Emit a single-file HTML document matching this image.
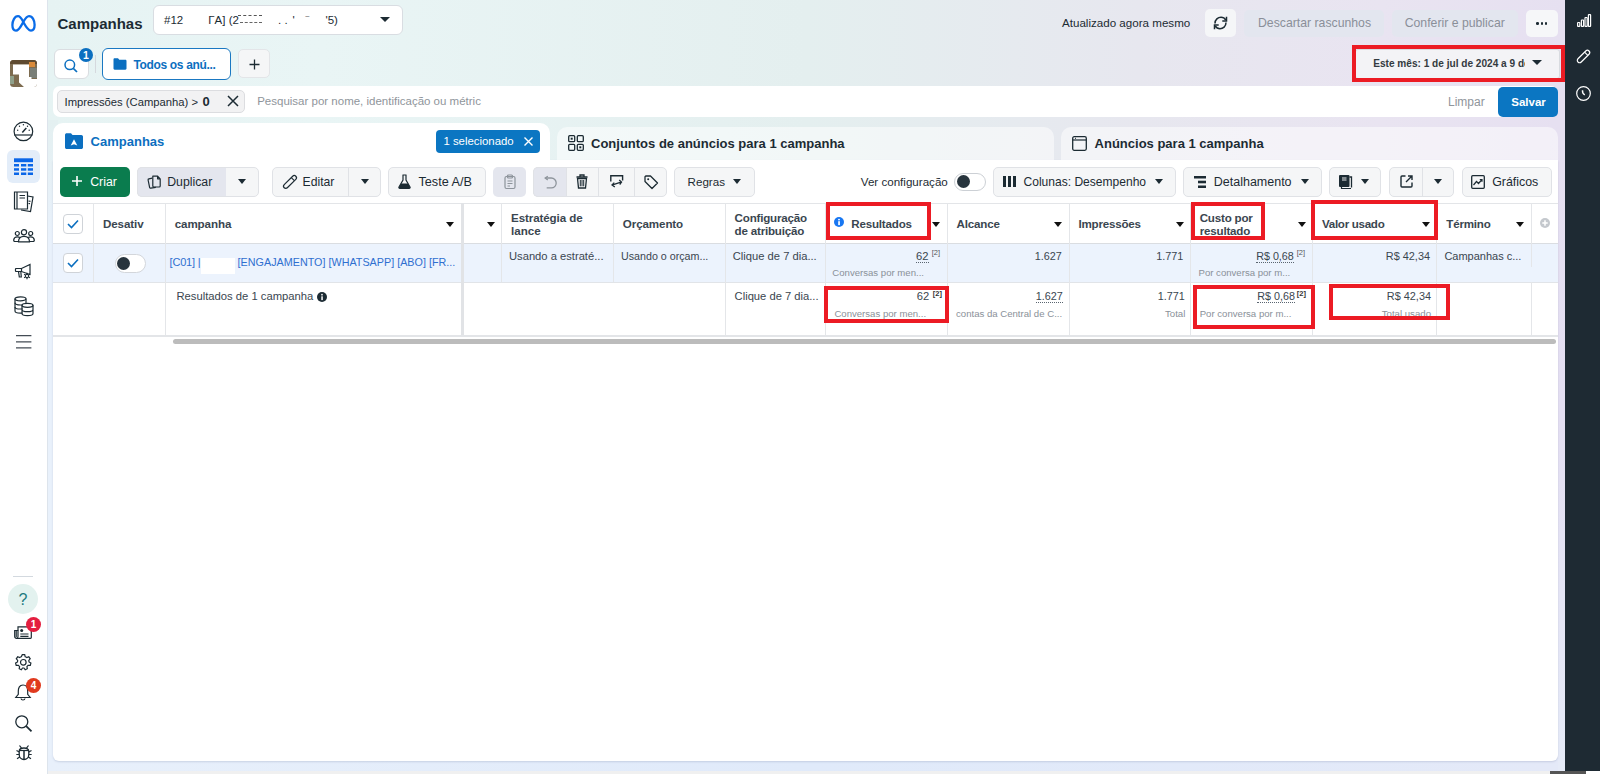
<!DOCTYPE html>
<html><head><meta charset="utf-8">
<style>
*{box-sizing:border-box;margin:0;padding:0}
html,body{width:1600px;height:774px;overflow:hidden;font-family:"Liberation Sans",sans-serif;color:#1c2b33}
body{position:relative;background:#fff}
.abs{position:absolute}
.t{position:absolute;white-space:nowrap;line-height:1}
svg{overflow:visible}
</style></head><body>
<div class="abs" style="left:48px;top:0px;width:1517px;height:774px;background:#e8eff9"></div>
<div class="abs" style="left:48px;top:0px;width:1517px;height:165px;background:linear-gradient(90deg,#e6f3f3 0%,#e9f5f5 18%,#e4efef 50%,#e7e7ef 72%,#e9e4f1 88%,#e6e0f1 100%)"></div>
<div class="abs" style="left:48px;top:120px;width:10px;height:654px;background:linear-gradient(180deg,#e4f0f1 0px,#e9f1fb 120px,#e9f1fb 100%)"></div>
<div class="abs" style="left:1550px;top:120px;width:15px;height:651px;background:linear-gradient(180deg,#e6e0f1 0px,#e4dff2 300px,#e6ebf8 100%)"></div>
<div class="abs" style="left:48px;top:755px;width:1510px;height:16px;background:linear-gradient(90deg,#e8f0fb 0%,#e0eafa 50%,#e4e9f8 100%)"></div>
<div class="abs" style="left:47px;top:771px;width:1553px;height:3px;background:#f0f0f0"></div>
<div class="abs" style="left:0px;top:0px;width:47px;height:774px;background:#fff"></div>
<div class="abs" style="left:46.5px;top:0px;width:1.5px;height:774px;background:#dde4ec"></div>
<div class="abs" style="left:1565px;top:0px;width:35px;height:771px;background:#1e2a33"></div>
<svg class="abs" style="left:11px;top:14px;" width="25" height="18" viewBox="0 0 25 18"><path d="M5 16.6 C8 16.6 10 12 12.3 8 C14 5 15.5 2.2 18 2.2 C21.5 2.2 23.6 6.5 23.6 10.8 C23.6 14.5 22 16.6 20 16.6 C17.5 16.6 15.5 14 12.3 8 C10.5 4.5 9.5 2.2 7 2.2 C3.5 2.2 1.4 7 1.4 11 C1.4 14.5 3 16.6 5 16.6 Z" fill="none" stroke="#0a6ce8" stroke-width="2.3" stroke-linejoin="round"/></svg>
<svg class="abs" style="left:10px;top:60px;" width="27" height="27" viewBox="0 0 27 27"><defs><clipPath id="av"><rect x="0" y="0" width="27" height="27" rx="3.5"/></clipPath></defs><g clip-path="url(#av)"><rect x="0" y="0" width="27" height="27" fill="#7d6c50"/><rect x="0" y="0" width="27" height="4" fill="#5e4a30"/><rect x="19" y="2" width="6" height="5" fill="#d98a3a"/><rect x="20" y="8" width="7" height="10" fill="#7a7f78"/><rect x="0" y="16" width="4" height="8" fill="#8fa08a"/><path d="M3 4.5 L19 4.5 L19 17 L21.5 17 L21.5 19 L27 19 L27 27 L14 27 L9 22.5 L9 14.5 L3 14.5 Z" fill="#ffffff"/></g></svg>
<div class="abs" style="left:7px;top:150px;width:33px;height:33px;background:#e3edf9;border-radius:6px"></div>
<svg class="abs" style="left:13px;top:121px;" width="21" height="21" viewBox="0 0 21 21"><circle cx="10.4" cy="10.4" r="9.3" fill="none" stroke="#1c2b33" stroke-width="1.2"/><path d="M1.3 14 L19.5 14" fill="none" stroke="#1c2b33" stroke-width="1.2"/><path d="M9.3 11.5 L13.3 7" fill="none" stroke="#1c2b33" stroke-width="1.5"/><g fill="#1c2b33"><circle cx="4.7" cy="9.3" r="0.7"/><circle cx="6.5" cy="5.3" r="0.7"/><circle cx="10.4" cy="3.8" r="0.7"/><circle cx="14.5" cy="5.3" r="0.7"/><circle cx="16.2" cy="9.3" r="0.7"/></g></svg>
<svg class="abs" style="left:14px;top:158px;" width="19" height="17" viewBox="0 0 19 17"><g fill="#0a66e8"><rect x="0" y="0.3" width="19" height="3.9"/><rect x="0" y="6" width="5" height="2.5"/><rect x="7" y="6" width="5.3" height="2.5"/><rect x="13.8" y="6" width="5.2" height="2.5"/><rect x="0" y="10.2" width="5" height="2.5"/><rect x="7" y="10.2" width="5.3" height="2.5"/><rect x="13.8" y="10.2" width="5.2" height="2.5"/><rect x="0" y="14.5" width="5" height="2.5"/><rect x="7" y="14.5" width="5.3" height="2.5"/><rect x="13.8" y="14.5" width="5.2" height="2.5"/></g></svg>
<svg class="abs" style="left:13px;top:191px;" width="21" height="21" viewBox="0 0 21 21"><path d="M14.5 5 L20 6 L17.5 20.5 L8 19" fill="none" stroke="#1c2b33" stroke-width="1.2"/><path d="M1.5 1 L14.5 1 L14.5 18 L1.5 18 Z" fill="none" stroke="#1c2b33" stroke-width="1.2"/><path d="M4 1 L4 18" fill="none" stroke="#1c2b33" stroke-width="1.2"/><path d="M6.5 4.5 L12 4.5 M6.5 7 L12 7" fill="none" stroke="#1c2b33" stroke-width="1.2"/><path d="M15.5 10 L17.5 10.3 M15.5 12.5 L17 12.7" fill="none" stroke="#1c2b33" stroke-width="1.2"/></svg>
<svg class="abs" style="left:12.5px;top:229px;" width="22" height="14" viewBox="0 0 22 14"><circle cx="11" cy="3.2" r="2.6" fill="none" stroke="#1c2b33" stroke-width="1.2"/><circle cx="4.3" cy="4.5" r="2" fill="none" stroke="#1c2b33" stroke-width="1.2"/><circle cx="17.7" cy="4.5" r="2" fill="none" stroke="#1c2b33" stroke-width="1.2"/><path d="M5.5 12.8 C5.5 8.8 8 7.3 11 7.3 C14 7.3 16.5 8.8 16.5 12.8 Z" fill="none" stroke="#1c2b33" stroke-width="1.2"/><path d="M5.5 12.5 L2 12.5 C0.8 12.5 0.6 11.5 0.7 10.8 C1 8.8 2.5 7.8 4.3 7.8 C5.3 7.8 6.2 8.1 6.9 8.6" fill="none" stroke="#1c2b33" stroke-width="1.2"/><path d="M16.5 12.5 L20 12.5 C21.2 12.5 21.4 11.5 21.3 10.8 C21 8.8 19.5 7.8 17.7 7.8 C16.7 7.8 15.8 8.1 15.1 8.6" fill="none" stroke="#1c2b33" stroke-width="1.2"/></svg>
<svg class="abs" style="left:15px;top:263px;" width="17" height="17" viewBox="0 0 17 17"><path d="M1 5.5 L6.5 5.5 L15 1.5 L15 11.5 L6.5 8.5 L1 8.5 C0.7 8.5 0.5 8.3 0.5 8 L0.5 6 C0.5 5.7 0.7 5.5 1 5.5 Z" fill="none" stroke="#1c2b33" stroke-width="1.2"/><path d="M3.5 8.5 L4.3 14 L6.3 14 L5.8 8.5" fill="none" stroke="#1c2b33" stroke-width="1.2"/><path d="M6.5 5.5 L6.5 8.5" fill="none" stroke="#1c2b33" stroke-width="1.2"/><g transform="translate(12,13)"><path d="M0 -3.3 L0 3.3 M-2.9 -1.65 L2.9 1.65 M-2.9 1.65 L2.9 -1.65" stroke="#1c2b33" stroke-width="1.2"/><circle r="1.6" fill="#fff" stroke="#1c2b33" stroke-width="1"/></g></svg>
<svg class="abs" style="left:14px;top:296px;" width="20" height="21" viewBox="0 0 20 21"><ellipse cx="6.5" cy="2.8" rx="5.5" ry="2" fill="none" stroke="#1c2b33" stroke-width="1.2"/><path d="M1 2.8 L1 15 C1 16.3 3.5 17.2 6.5 17.2 C7.3 17.2 8 17.1 8.6 17" fill="none" stroke="#1c2b33" stroke-width="1.2"/><path d="M12 2.8 L12 8" fill="none" stroke="#1c2b33" stroke-width="1.2"/><path d="M1 6.8 C1 8.1 3.5 9 6.5 9 C7.5 9 8.2 8.9 8.6 8.8 M1 10.9 C1 12.2 3.5 13 6.5 13 C7.5 13 8.2 12.9 8.6 12.8" fill="none" stroke="#1c2b33" stroke-width="1.2"/><ellipse cx="13.5" cy="9.3" rx="5.5" ry="2" fill="#fff" stroke="#1c2b33" stroke-width="1.2"/><path d="M8 9.3 L8 17.5 C8 18.8 10.5 19.7 13.5 19.7 C16.5 19.7 19 18.8 19 17.5 L19 9.3 M8 13.4 C8 14.7 10.5 15.6 13.5 15.6 C16.5 15.6 19 14.7 19 13.4" fill="none" stroke="#1c2b33" stroke-width="1.2"/></svg>
<svg class="abs" style="left:15.8px;top:335px;" width="16" height="14" viewBox="0 0 16 14"><path d="M0 0.6 L15.4 0.6 M0 6.8 L15.4 6.8 M0 12.9 L15.4 12.9" stroke="#444c55" stroke-width="1.2"/></svg>
<div class="abs" style="left:13.4px;top:576px;width:19.6px;height:1.2px;background:#d3d9df"></div>
<div class="abs" style="left:8.2px;top:584px;width:30px;height:30px;border-radius:50%;background:#e3f2ef"></div>
<div class="t" style="left:18.5px;top:591.96px;font-size:16px;color:#1d7a80;font-weight:normal;">?</div>
<svg class="abs" style="left:14px;top:626px;" width="18" height="13" viewBox="0 0 18 13"><path d="M4 0.8 L16.5 0.8 C17 0.8 17.3 1.1 17.3 1.6 L17.3 11.5 C17.3 12 17 12.3 16.5 12.3 L2.5 12.3 C1.5 12.3 0.7 11.5 0.7 10.5 L0.7 4.5 L4 4.5 Z" fill="none" stroke="#1c2b33" stroke-width="1.2"/><path d="M4 4.5 L4 10.5 C4 11.5 3.4 12.3 2.5 12.3" fill="none" stroke="#1c2b33" stroke-width="1.2"/><path d="M2.2 5 L2.2 11" fill="none" stroke="#1c2b33" stroke-width="1.2"/><circle cx="7.7" cy="4.5" r="1.5" fill="#1c2b33"/><path d="M6.3 8 L14.5 8 M6.3 10.3 L14.5 10.3" fill="none" stroke="#1c2b33" stroke-width="1.2"/></svg>
<div class="abs" style="left:26px;top:617px;width:15px;height:15px;border-radius:50%;background:#e41e3f;color:#fff;font-size:10px;font-weight:bold;text-align:center;line-height:15px">1</div>
<svg class="abs" style="left:14.5px;top:654.3px;" width="17" height="17" viewBox="0 0 17 17"><path d="M7.3 0.7 L9.7 0.7 L10.2 2.8 C10.8 3 11.3 3.3 11.8 3.6 L13.8 2.8 L15.2 4.8 L13.8 6.4 C13.9 6.9 14 7.5 14 8 L15.9 9 L15.3 11.3 L13.1 11.3 C12.8 11.8 12.4 12.2 11.9 12.6 L12.3 14.7 L10.2 15.7 L8.9 14 C8.5 14 8 14 7.6 14 L6.3 15.7 L4.2 14.7 L4.6 12.6 C4.1 12.2 3.7 11.8 3.4 11.3 L1.2 11.3 L0.6 9 L2.5 8 C2.5 7.5 2.6 6.9 2.7 6.4 L1.3 4.8 L2.7 2.8 L4.7 3.6 C5.2 3.3 5.7 3 6.3 2.8 Z" fill="none" stroke="#1c2b33" stroke-width="1.2"/><circle cx="8.3" cy="8.3" r="2.8" fill="none" stroke="#1c2b33" stroke-width="1.2"/></svg>
<svg class="abs" style="left:15px;top:683.5px;" width="16" height="17.5" viewBox="0 0 16 17.5"><path d="M8 1 C4.5 1 3.3 3.8 3.3 7 L3.3 10.3 L0.8 13.5 L15.2 13.5 L12.7 10.3 L12.7 7 C12.7 3.8 11.5 1 8 1 Z" fill="none" stroke="#1c2b33" stroke-width="1.2"/><path d="M6 14.5 C6.3 16.5 9.7 16.5 10 14.5" fill="none" stroke="#1c2b33" stroke-width="1.2"/></svg>
<div class="abs" style="left:26px;top:677.5px;width:15px;height:15px;border-radius:50%;background:#e03a1e;color:#fff;font-size:10px;font-weight:bold;text-align:center;line-height:15px">4</div>
<svg class="abs" style="left:15px;top:714.5px;" width="18" height="17" viewBox="0 0 18 17"><circle cx="6.8" cy="6.8" r="6" fill="none" stroke="#1c2b33" stroke-width="1.3"/><path d="M11.2 11.2 L16.5 16.3" stroke="#1c2b33" stroke-width="1.8"/></svg>
<svg class="abs" style="left:15.5px;top:744px;" width="16" height="16.5" viewBox="0 0 16 16.5"><path d="M3.2 7.5 C3.2 4.8 5.3 4 8 4 C10.7 4 12.8 4.8 12.8 7.5 L12.8 10.5 C12.8 13.5 10.7 15.5 8 15.5 C5.3 15.5 3.2 13.5 3.2 10.5 Z" fill="none" stroke="#1c2b33" stroke-width="1.3"/><path d="M8 6 L8 15" stroke="#1c2b33" stroke-width="1.5"/><path d="M3.2 6.5 L12.8 6.5" fill="none" stroke="#1c2b33" stroke-width="1.2"/><path d="M5.5 4.2 L3.5 1.5 M10.5 4.2 L12.5 1.5 M3.3 8 L0.5 6.5 M12.7 8 L15.5 6.5 M3.2 10.5 L0.3 10.5 M12.8 10.5 L15.7 10.5 M3.7 13 L1 14.8 M12.3 13 L15 14.8" fill="none" stroke="#1c2b33" stroke-width="1.2"/></svg>
<svg class="abs" style="left:1576.5px;top:13.5px;" width="14" height="13" viewBox="0 0 14 13"><g fill="none" stroke="#fff" stroke-width="1.2"><rect x="0.6" y="8.5" width="2.2" height="3.9" rx="0.5"/><rect x="4.4" y="6" width="2.2" height="6.4" rx="0.5"/><rect x="8" y="3.5" width="2.2" height="8.9" rx="0.5"/><rect x="11.4" y="0.6" width="2.2" height="11.8" rx="0.5"/></g></svg>
<svg class="abs" style="left:1576px;top:49px;" width="15" height="15" viewBox="0 0 15 15"><g transform="rotate(-45 7.5 7.5)"><rect x="-0.3" y="5.2" width="15.6" height="4.6" rx="2.3" fill="none" stroke="#fff" stroke-width="1.2"/><path d="M11.3 5.2 L11.3 9.8" stroke="#fff" stroke-width="1.1"/></g></svg>
<svg class="abs" style="left:1576px;top:85.5px;" width="15" height="15" viewBox="0 0 15 15"><circle cx="7.5" cy="7.5" r="6.8" fill="none" stroke="#fff" stroke-width="1.2"/><path d="M6.5 4.3 C6.3 6.5 6.8 7.8 8.8 8.8" fill="none" stroke="#fff" stroke-width="1.4"/></svg>
<div class="t" style="left:57.5px;top:15.50px;font-size:15px;color:#1c2b33;font-weight:bold;">Campanhas</div>
<div class="abs" style="left:153px;top:5px;width:250px;height:30px;background:#fff;border:1px solid #d9dde2;border-radius:6px"></div>
<div class="t" style="left:164px;top:14.77px;font-size:11.5px;color:#1c2b33;font-weight:normal;">#12</div>
<div class="t" style="left:208.25px;top:14.77px;font-size:11.5px;color:#1c2b33;font-weight:normal;">ΓA] (2</div>
<div class="abs" style="left:238px;top:15px;width:24px;height:2px;border-top:1px dashed #555"></div>
<div class="abs" style="left:240px;top:22px;width:22px;height:2px;border-top:1.5px dashed #666"></div>
<div class="t" style="left:278px;top:14.77px;font-size:11.5px;color:#1c2b33;font-weight:normal;">. .</div>
<div class="t" style="left:292.5px;top:14.77px;font-size:11.5px;color:#1c2b33;font-weight:normal;">'</div>
<div class="t" style="left:305px;top:12.73px;font-size:8px;color:#555;font-weight:normal;">~</div>
<div class="t" style="left:325.5px;top:14.77px;font-size:11.5px;color:#1c2b33;font-weight:normal;">'5)</div>
<div class="abs" style="left:380.0px;top:16.8px;width:0;height:0;border-left:5.0px solid transparent;border-right:5.0px solid transparent;border-top:5.5px solid #1c2b33"></div>
<div class="t" style="left:1062px;top:17.43px;font-size:11.6px;color:#1c2b33;font-weight:normal;">Atualizado agora mesmo</div>
<div class="abs" style="left:1205px;top:9px;width:31px;height:28px;background:#f5f6f8;border-radius:5px"></div>
<svg class="abs" style="left:1213px;top:16px;" width="15" height="14" viewBox="0 0 15 14"><path d="M2 7.5 C2 3.5 5 1.3 8 1.3 C10.5 1.3 12 2.7 12.8 4" fill="none" stroke="#1c2b33" stroke-width="1.5"/><path d="M13.5 0.8 L13.5 5 L9.3 5" fill="none" stroke="#1c2b33" stroke-width="1.5"/><path d="M13 6.5 C13 10.5 10 12.7 7 12.7 C4.5 12.7 3 11.3 2.2 10" fill="none" stroke="#1c2b33" stroke-width="1.5"/><path d="M1.5 13.2 L1.5 9 L5.7 9" fill="none" stroke="#1c2b33" stroke-width="1.5"/></svg>
<div class="abs" style="left:1244px;top:9.5px;width:140px;height:27.5px;background:#e3e6ef;border-radius:5px"></div>
<div class="t" style="left:1258px;top:17.13px;font-size:12.25px;color:#8a8f99;font-weight:normal;">Descartar rascunhos</div>
<div class="abs" style="left:1392px;top:9.5px;width:126px;height:27.5px;background:#e3e6ef;border-radius:5px"></div>
<div class="t" style="left:1404.7px;top:17.13px;font-size:12.25px;color:#8a8f99;font-weight:normal;">Conferir e publicar</div>
<div class="abs" style="left:1526px;top:9.5px;width:31.5px;height:27.5px;background:#f6f7f9;border-radius:5px"></div>
<div class="abs" style="left:1536.2px;top:22.1px;width:2.6px;height:2.6px;background:#1c2b33;border-radius:50%"></div>
<div class="abs" style="left:1540.5px;top:22.1px;width:2.6px;height:2.6px;background:#1c2b33;border-radius:50%"></div>
<div class="abs" style="left:1544.8px;top:22.1px;width:2.6px;height:2.6px;background:#1c2b33;border-radius:50%"></div>
<div class="abs" style="left:53.5px;top:49px;width:35.5px;height:30px;background:#fff;border:1px solid #dadde1;border-radius:6px"></div>
<svg class="abs" style="left:63.5px;top:58.5px;" width="14" height="14" viewBox="0 0 14 14"><circle cx="5.8" cy="5.8" r="4.8" fill="none" stroke="#0b6fc0" stroke-width="1.5"/><path d="M9.3 9.3 L13 13" stroke="#0b6fc0" stroke-width="1.7"/></svg>
<div class="abs" style="left:79px;top:48px;width:14px;height:14px;border-radius:50%;background:#0b6fc0;color:#fff;font-size:10.5px;font-weight:bold;text-align:center;line-height:14px">1</div>
<div class="abs" style="left:95px;top:55px;width:1px;height:18px;background:#d5d9de"></div>
<div class="abs" style="left:102px;top:48px;width:129px;height:32px;background:#fff;border:1.5px solid #1a78c2;border-radius:6px"></div>
<svg class="abs" style="left:113px;top:58px;" width="14" height="12" viewBox="0 0 14 12"><path d="M0.5 1.5 C0.5 0.8 1 0.3 1.6 0.3 L5 0.3 L6.3 1.8 L12.4 1.8 C13 1.8 13.5 2.3 13.5 2.9 L13.5 10.6 C13.5 11.2 13 11.7 12.4 11.7 L1.6 11.7 C1 11.7 0.5 11.2 0.5 10.6 Z" fill="#0b6fc0"/></svg>
<div class="t" style="left:133.5px;top:59.04px;font-size:12px;color:#0b6fc0;font-weight:bold;letter-spacing:-0.35px">Todos os anú...</div>
<div class="abs" style="left:238px;top:49px;width:32px;height:29px;background:#f5f6f7;border:1px solid #e3e5e8;border-radius:5px"></div>
<svg class="abs" style="left:249px;top:59px;" width="11" height="11" viewBox="0 0 11 11"><path d="M5.5 0.5 L5.5 10.5 M0.5 5.5 L10.5 5.5" stroke="#1c2b33" stroke-width="1.3"/></svg>
<div class="abs" style="left:1355px;top:49px;width:205px;height:30px;background:#f3f3f6;border:1px solid #d8dbe0;border-radius:3px"></div>
<div class="abs" style="left:1373px;top:52px;width:152px;height:22px;overflow:hidden">
<div class="t" style="left:0.2px;top:6.65px;font-size:10.1px;color:#333a40;font-weight:bold;">Este mês: 1 de jul de 2024 a 9 de</div>
</div>
<div class="abs" style="left:1532.0px;top:60.2px;width:0;height:0;border-left:5.0px solid transparent;border-right:5.0px solid transparent;border-top:5.5px solid #1c2b33"></div>
<div class="abs" style="left:1351.5px;top:44.8px;width:213.0px;height:37.7px;border:4.3px solid #ec1b24"></div>
<div class="abs" style="left:53px;top:86px;width:1505px;height:31px;background:#fff;border-radius:7px"></div>
<div class="abs" style="left:57px;top:90px;width:188px;height:23px;background:#f2f2f3;border:1px solid #dcdde0;border-radius:5px"></div>
<div class="t" style="left:64.5px;top:96.73px;font-size:11.25px;color:#1c2b33;font-weight:normal;">Impressões (Campanha) &gt;</div>
<div class="t" style="left:202.5px;top:95.25px;font-size:13px;color:#1c2b33;font-weight:bold;">0</div>
<svg class="abs" style="left:227px;top:95px;" width="12" height="12" viewBox="0 0 12 12"><path d="M1 1 L11 11 M11 1 L1 11" stroke="#1c2b33" stroke-width="1.5"/></svg>
<div class="t" style="left:257.2px;top:96.27px;font-size:11.5px;color:#8f959b;font-weight:normal;">Pesquisar por nome, identificação ou métric</div>
<div class="t" style="left:1448px;top:95.84px;font-size:12px;color:#8f959b;font-weight:normal;">Limpar</div>
<div class="abs" style="left:1497.5px;top:86.5px;width:60.5px;height:30px;background:#0b76c2;border-radius:5px"></div>
<div class="t" style="left:1511.3px;top:96.87px;font-size:11.5px;color:#fff;font-weight:bold;">Salvar</div>
<div class="abs" style="left:53px;top:160px;width:1505px;height:601px;background:#fff;border-radius:0 0 6px 6px;box-shadow:0 1px 2px rgba(60,80,120,0.18)"></div>
<div class="abs" style="left:53px;top:123px;width:497px;height:40px;background:#fff;border-radius:10px 10px 0 0"></div>
<div class="abs" style="left:557px;top:127px;width:497px;height:36px;background:rgba(255,255,255,0.5);border-radius:10px 10px 0 0"></div>
<div class="abs" style="left:1061px;top:127px;width:497px;height:36px;background:rgba(255,255,255,0.5);border-radius:10px 10px 0 0"></div>
<svg class="abs" style="left:64.5px;top:133.3px;" width="18" height="16.7" viewBox="0 0 18 16.7"><path d="M0 2 C0 1 0.8 0.3 1.6 0.3 L6 0.3 L7.5 2 L16.4 2 C17.2 2 18 2.8 18 3.6 L18 14.4 C18 15.2 17.2 16 16.4 16 L1.6 16 C0.8 16 0 15.2 0 14.4 Z" fill="#0b6fc0"/><path d="M9 6.3 L12.3 12.6 L9 11.2 L5.7 12.6 Z" fill="#fff"/></svg>
<div class="t" style="left:90.6px;top:135.20px;font-size:13px;color:#0b6fc0;font-weight:bold;">Campanhas</div>
<div class="abs" style="left:436px;top:130px;width:104px;height:23px;background:#0b76c2;border-radius:4px"></div>
<div class="t" style="left:443.4px;top:135.95px;font-size:11.4px;color:#fff;font-weight:normal;">1 selecionado</div>
<svg class="abs" style="left:524px;top:137px;" width="9" height="9" viewBox="0 0 9 9"><path d="M0.5 0.5 L8.5 8.5 M8.5 0.5 L0.5 8.5" stroke="#fff" stroke-width="1.4"/></svg>
<svg class="abs" style="left:568px;top:135px;" width="16" height="16" viewBox="0 0 16 16"><g fill="none" stroke="#1c2b33" stroke-width="1.3"><rect x="0.7" y="0.7" width="6" height="6" rx="1"/><rect x="9.3" y="0.7" width="6" height="6" rx="1"/><rect x="0.7" y="9.3" width="6" height="6" rx="1"/><rect x="9.3" y="9.3" width="6" height="6" rx="1"/></g><rect x="2.7" y="2.7" width="2" height="2" fill="#1c2b33"/><rect x="11.3" y="11.3" width="2" height="2" fill="#1c2b33"/></svg>
<div class="t" style="left:591px;top:136.60px;font-size:13px;color:#1c2b33;font-weight:bold;">Conjuntos de anúncios para 1 campanha</div>
<svg class="abs" style="left:1072px;top:136px;" width="15" height="15" viewBox="0 0 15 15"><rect x="0.7" y="0.7" width="13.6" height="13.6" rx="1.5" fill="none" stroke="#1c2b33" stroke-width="1.3"/><path d="M0.7 4 L14.3 4" stroke="#1c2b33" stroke-width="1.2"/><path d="M3 2.3 L4 2.3" stroke="#1c2b33" stroke-width="1"/></svg>
<div class="t" style="left:1094.6px;top:136.60px;font-size:13px;color:#1c2b33;font-weight:bold;">Anúncios para 1 campanha</div>
<div class="abs" style="left:60px;top:167px;width:70px;height:29.5px;background:#0a7c4e;border-radius:5px"></div>
<svg class="abs" style="left:72px;top:176px;" width="10" height="10" viewBox="0 0 10 10"><path d="M5 0 L5 10 M0 5 L10 5" stroke="#fff" stroke-width="1.6"/></svg>
<div class="t" style="left:90.2px;top:175.89px;font-size:12.3px;color:#fff;font-weight:normal;">Criar</div>
<div class="abs" style="left:137px;top:167px;width:121.5px;height:29.5px;background:#f5f6f7;border:1px solid #e0e2e6;border-radius:5px"></div>
<div class="abs" style="left:137px;top:167px;width:89px;height:29.5px;background:#e4e6ee;border-radius:5px 0 0 5px;border:1px solid #e0e2e6;border-right:none"></div>
<svg class="abs" style="left:146.5px;top:174.5px;" width="14" height="14" viewBox="0 0 14 14"><path d="M5.2 3.2 L1.9 3.8 C1.3 3.9 1 4.4 1.1 5 L2.6 12.4 C2.7 13 3.2 13.3 3.8 13.2 L8.8 12.3" fill="none" stroke="#1c2b33" stroke-width="1.2" stroke-linejoin="round"/><path d="M5.8 1.2 L10.6 1.2 L13.2 3.8 L13.2 11 C13.2 11.6 12.8 12 12.2 12 L6.8 12 C6.2 12 5.8 11.6 5.8 11 Z M10.6 1.2 L10.6 3.8 L13.2 3.8" fill="none" stroke="#1c2b33" stroke-width="1.2" stroke-linejoin="round"/></svg>
<div class="t" style="left:167.2px;top:175.89px;font-size:12.3px;color:#1c2b33;font-weight:normal;">Duplicar</div>
<div class="abs" style="left:237.5px;top:178.8px;width:0;height:0;border-left:4.5px solid transparent;border-right:4.5px solid transparent;border-top:5.5px solid #1c2b33"></div>
<div class="abs" style="left:272px;top:167px;width:109px;height:29.5px;background:#f5f6f7;border:1px solid #e0e2e6;border-radius:5px"></div>
<div class="abs" style="left:348px;top:168px;width:1px;height:27.5px;background:#e0e2e6"></div>
<svg class="abs" style="left:282.5px;top:174.5px;" width="14" height="14" viewBox="0 0 14 14"><g transform="rotate(-45 7 7)"><rect x="-1.2" y="4.8" width="16.4" height="4.4" rx="2.2" fill="none" stroke="#1c2b33" stroke-width="1.2"/><path d="M11 4.8 L11 9.2" stroke="#1c2b33" stroke-width="1.1"/></g></svg>
<div class="t" style="left:302.6px;top:175.97px;font-size:12.2px;color:#1c2b33;font-weight:normal;">Editar</div>
<div class="abs" style="left:360.5px;top:178.8px;width:0;height:0;border-left:4.5px solid transparent;border-right:4.5px solid transparent;border-top:5.5px solid #1c2b33"></div>
<div class="abs" style="left:388.4px;top:167px;width:97.6px;height:29.5px;background:#f5f6f7;border:1px solid #e0e2e6;border-radius:5px"></div>
<svg class="abs" style="left:398.4px;top:174px;" width="13" height="15" viewBox="0 0 13 15"><path d="M4.5 1 L8.5 1 M5 1 L5 6 L1 13 C0.6 13.8 1 14.5 2 14.5 L11 14.5 C12 14.5 12.4 13.8 12 13 L8 6 L8 1" fill="none" stroke="#1c2b33" stroke-width="1.2"/><path d="M3 9.5 L10 9.5 L12 13.3 C12.3 14 12 14.5 11 14.5 L2 14.5 C1 14.5 0.7 14 1 13.3 Z" fill="#1c2b33"/></svg>
<div class="t" style="left:418.4px;top:175.55px;font-size:12.7px;color:#1c2b33;font-weight:normal;">Teste A/B</div>
<div class="abs" style="left:493px;top:167px;width:33px;height:29.5px;background:#e4e6ee;border-radius:5px"></div>
<svg class="abs" style="left:503.5px;top:174px;" width="12" height="15" viewBox="0 0 12 15"><rect x="1" y="2.5" width="10" height="12" rx="1.5" fill="none" stroke="#8d949b" stroke-width="1.2"/><rect x="3.5" y="1" width="5" height="3" rx="1" fill="none" stroke="#8d949b" stroke-width="1.2"/><path d="M3.5 7 L8.5 7 M3.5 9.5 L8.5 9.5 M3.5 12 L6 12" stroke="#8d949b" stroke-width="1"/></svg>
<div class="abs" style="left:533.2px;top:167px;width:134px;height:29.5px;background:#f5f6f7;border:1px solid #e0e2e6;border-radius:5px"></div>
<div class="abs" style="left:533.2px;top:167px;width:33.3px;height:29.5px;background:#e4e6ee;border-radius:5px 0 0 5px;border:1px solid #e0e2e6;border-right:none"></div>
<div class="abs" style="left:566.3px;top:168px;width:1px;height:27.5px;background:#e0e2e6"></div>
<div class="abs" style="left:598.4px;top:168px;width:1px;height:27.5px;background:#e0e2e6"></div>
<div class="abs" style="left:634.4px;top:168px;width:1px;height:27.5px;background:#e0e2e6"></div>
<svg class="abs" style="left:543.5px;top:176px;" width="13" height="12.5" viewBox="0 0 13 12.5"><path d="M2 2 L7.3 2 C10 2 12.2 4.3 12.2 7 C12.2 9.7 10 11.8 7.3 11.8 L2.7 11.8" fill="none" stroke="#8d949b" stroke-width="1.3"/><path d="M3.8 0.3 L1.2 2 L3.8 3.9" fill="none" stroke="#8d949b" stroke-width="1.3"/></svg>
<svg class="abs" style="left:576px;top:174px;" width="12" height="15" viewBox="0 0 12 15"><path d="M0.5 3 L11.5 3 M4 3 L4 1 L8 1 L8 3" fill="none" stroke="#1c2b33" stroke-width="1.3"/><path d="M1.5 4.5 L2.5 14 L9.5 14 L10.5 4.5 Z" fill="none" stroke="#1c2b33" stroke-width="1.3"/><path d="M4.3 6 L4.3 12.3 M6 6 L6 12.3 M7.7 6 L7.7 12.3" stroke="#1c2b33" stroke-width="1"/></svg>
<svg class="abs" style="left:610px;top:175px;" width="14" height="13" viewBox="0 0 14 13"><path d="M0.8 6.5 L0.8 0.8 L12.6 0.8 L12.6 5.5" fill="none" stroke="#1c2b33" stroke-width="1.4"/><path d="M2.5 9.8 L11 7.2" fill="none" stroke="#1c2b33" stroke-width="1.3"/><path d="M4.3 7.6 L2 9.9 L4.8 12" fill="none" stroke="#1c2b33" stroke-width="1.3"/><path d="M9.2 5 L11.5 7 L9.7 9.5" fill="none" stroke="#1c2b33" stroke-width="1.3"/></svg>
<svg class="abs" style="left:643.6px;top:174.5px;" width="14" height="14" viewBox="0 0 14 14"><path d="M1 1.8 L1 6.5 L8 13.5 L13.5 8 L6.5 1 L1.8 1 Z" fill="none" stroke="#1c2b33" stroke-width="1.3" stroke-linejoin="round"/><circle cx="4.2" cy="4.2" r="1" fill="#1c2b33"/></svg>
<div class="abs" style="left:674.4px;top:167px;width:80.2px;height:29.5px;background:#f5f6f7;border:1px solid #e0e2e6;border-radius:5px"></div>
<div class="t" style="left:687.6px;top:176.48px;font-size:11.6px;color:#1c2b33;font-weight:normal;">Regras</div>
<div class="abs" style="left:733.0px;top:178.8px;width:0;height:0;border-left:4.5px solid transparent;border-right:4.5px solid transparent;border-top:5.5px solid #1c2b33"></div>
<div class="t" style="left:860.8px;top:176.48px;font-size:11.6px;color:#1c2b33;font-weight:normal;">Ver configuração</div>
<div class="abs" style="left:954px;top:172.5px;width:31.5px;height:18px;background:#fff;border:1px solid #ccd0d5;border-radius:9px"></div>
<div class="abs" style="left:956.5px;top:175px;width:13px;height:13px;background:#27343d;border-radius:50%"></div>
<div class="abs" style="left:993px;top:167px;width:183px;height:29.5px;background:#f5f6f7;border:1px solid #e0e2e6;border-radius:5px"></div>
<svg class="abs" style="left:1003px;top:176px;" width="13" height="11" viewBox="0 0 13 11"><rect x="0" y="0" width="3" height="11" fill="#1c2b33"/><rect x="5" y="0" width="3" height="11" fill="#1c2b33"/><rect x="10" y="0" width="3" height="11" fill="#1c2b33"/></svg>
<div class="t" style="left:1023.5px;top:176.10px;font-size:12.05px;color:#1c2b33;font-weight:normal;">Colunas: Desempenho</div>
<div class="abs" style="left:1155.0px;top:178.8px;width:0;height:0;border-left:4.5px solid transparent;border-right:4.5px solid transparent;border-top:5.5px solid #1c2b33"></div>
<div class="abs" style="left:1183.3px;top:167px;width:138.7px;height:29.5px;background:#f5f6f7;border:1px solid #e0e2e6;border-radius:5px"></div>
<svg class="abs" style="left:1193.5px;top:175.5px;" width="12" height="12" viewBox="0 0 12 12"><rect x="0" y="0" width="12" height="2.5" fill="#1c2b33"/><rect x="4" y="4.7" width="8" height="2.6" fill="#1c2b33"/><rect x="4" y="9.5" width="8" height="2.5" fill="#1c2b33"/></svg>
<div class="t" style="left:1213.75px;top:175.72px;font-size:12.5px;color:#1c2b33;font-weight:normal;">Detalhamento</div>
<div class="abs" style="left:1300.5px;top:178.8px;width:0;height:0;border-left:4.5px solid transparent;border-right:4.5px solid transparent;border-top:5.5px solid #1c2b33"></div>
<div class="abs" style="left:1329.3px;top:167px;width:52.2px;height:29.5px;background:#f5f6f7;border:1px solid #e0e2e6;border-radius:5px"></div>
<svg class="abs" style="left:1338.75px;top:174.5px;" width="14" height="14" viewBox="0 0 14 14"><path d="M2.5 3 L2.5 13.5 L12 13.5" fill="none" stroke="#1c2b33" stroke-width="1.2"/><rect x="0" y="0" width="10.5" height="12" rx="1" fill="#1c2b33"/><path d="M3 3 L7.5 3 M3 5 L7.5 5" stroke="#fff" stroke-width="0.9"/><path d="M10.5 2 L12.5 2 L12.5 12.5" fill="none" stroke="#1c2b33" stroke-width="1.3"/></svg>
<div class="abs" style="left:1361.1px;top:178.8px;width:0;height:0;border-left:4.5px solid transparent;border-right:4.5px solid transparent;border-top:5.5px solid #1c2b33"></div>
<div class="abs" style="left:1389.3px;top:167px;width:65.2px;height:29.5px;background:#f5f6f7;border:1px solid #e0e2e6;border-radius:5px"></div>
<div class="abs" style="left:1421.7px;top:168px;width:1px;height:27.5px;background:#e0e2e6"></div>
<svg class="abs" style="left:1399.5px;top:175px;" width="13" height="13" viewBox="0 0 13 13"><path d="M5.5 1 L2 1 C1.4 1 1 1.4 1 2 L1 11 C1 11.6 1.4 12 2 12 L11 12 C11.6 12 12 11.6 12 11 L12 7.5" fill="none" stroke="#1c2b33" stroke-width="1.4"/><path d="M8 1 L12 1 L12 5 M12 1 L6 7" fill="none" stroke="#1c2b33" stroke-width="1.4"/></svg>
<div class="abs" style="left:1433.8px;top:178.8px;width:0;height:0;border-left:4.5px solid transparent;border-right:4.5px solid transparent;border-top:5.5px solid #1c2b33"></div>
<div class="abs" style="left:1461.75px;top:167px;width:90px;height:29.5px;background:#f5f6f7;border:1px solid #e0e2e6;border-radius:5px"></div>
<svg class="abs" style="left:1470.75px;top:174.5px;" width="14" height="14" viewBox="0 0 14 14"><rect x="0.7" y="0.7" width="12.6" height="12.6" rx="1" fill="none" stroke="#1c2b33" stroke-width="1.3"/><path d="M2.5 10 L5.5 6.5 L7.5 8.5 L11 4.5 M8.8 4.5 L11 4.5 L11 6.7" fill="none" stroke="#1c2b33" stroke-width="1.2"/></svg>
<div class="t" style="left:1492.2px;top:175.80px;font-size:12.4px;color:#1c2b33;font-weight:normal;">Gráficos</div>
<div class="abs" style="left:53px;top:203px;width:1505px;height:1px;background:#e3e5e8"></div>
<div class="abs" style="left:53px;top:243px;width:1505px;height:1px;background:#dadde1"></div>
<div class="abs" style="left:53px;top:244px;width:1505px;height:38px;background:#ecf3fd"></div>
<div class="abs" style="left:53px;top:282px;width:1505px;height:1px;background:#e1e4e8"></div>
<div class="abs" style="left:53px;top:335px;width:1505px;height:1.5px;background:#e3e5e8"></div>
<div class="abs" style="left:93px;top:203px;width:1px;height:79px;background:#e4e6e9"></div>
<div class="abs" style="left:165px;top:203px;width:1px;height:79px;background:#e4e6e9"></div>
<div class="abs" style="left:501px;top:203px;width:1px;height:79px;background:#e4e6e9"></div>
<div class="abs" style="left:613px;top:203px;width:1px;height:79px;background:#e4e6e9"></div>
<div class="abs" style="left:725px;top:203px;width:1px;height:79px;background:#e4e6e9"></div>
<div class="abs" style="left:825px;top:203px;width:1px;height:79px;background:#e4e6e9"></div>
<div class="abs" style="left:947px;top:203px;width:1px;height:79px;background:#e4e6e9"></div>
<div class="abs" style="left:1069px;top:203px;width:1px;height:79px;background:#e4e6e9"></div>
<div class="abs" style="left:1190px;top:203px;width:1px;height:79px;background:#e4e6e9"></div>
<div class="abs" style="left:1312px;top:203px;width:1px;height:79px;background:#e4e6e9"></div>
<div class="abs" style="left:1436px;top:203px;width:1px;height:79px;background:#e4e6e9"></div>
<div class="abs" style="left:1531px;top:203px;width:1px;height:64px;background:#e4e6e9"></div>
<div class="abs" style="left:165px;top:282px;width:1px;height:53px;background:#e4e6e9"></div>
<div class="abs" style="left:725px;top:282px;width:1px;height:53px;background:#e4e6e9"></div>
<div class="abs" style="left:825px;top:282px;width:1px;height:53px;background:#e4e6e9"></div>
<div class="abs" style="left:947px;top:282px;width:1px;height:53px;background:#e4e6e9"></div>
<div class="abs" style="left:1069px;top:282px;width:1px;height:53px;background:#e4e6e9"></div>
<div class="abs" style="left:1190px;top:282px;width:1px;height:53px;background:#e4e6e9"></div>
<div class="abs" style="left:1312px;top:282px;width:1px;height:53px;background:#e4e6e9"></div>
<div class="abs" style="left:1436px;top:282px;width:1px;height:53px;background:#e4e6e9"></div>
<div class="abs" style="left:1531px;top:282px;width:1px;height:53px;background:#e4e6e9"></div>
<div class="abs" style="left:461px;top:203px;width:2.5px;height:132px;background:#e1e3e6"></div>
<div class="abs" style="left:63px;top:214px;width:20px;height:20px;background:#fff;border:1px solid #cfd3d8;border-radius:4px"></div>
<svg class="abs" style="left:67px;top:219px;" width="12" height="10" viewBox="0 0 12 10"><path d="M1 5 L4.5 8.5 L11 1.5" fill="none" stroke="#0b6fc0" stroke-width="1.6"/></svg>
<div class="abs" style="left:63px;top:253px;width:20px;height:20px;background:#fff;border:1px solid #cfd3d8;border-radius:4px"></div>
<svg class="abs" style="left:67px;top:258px;" width="12" height="10" viewBox="0 0 12 10"><path d="M1 5 L4.5 8.5 L11 1.5" fill="none" stroke="#0b6fc0" stroke-width="1.6"/></svg>
<div class="abs" style="left:114.5px;top:254px;width:31px;height:18.5px;background:#fff;border:1px solid #d3d6db;border-radius:9.5px"></div>
<div class="abs" style="left:116.8px;top:256.5px;width:13.2px;height:13.2px;background:#27343d;border-radius:50%"></div>
<div class="t" style="left:103px;top:217.88px;font-size:11.6px;color:#3a4650;font-weight:bold;letter-spacing:-0.1px">Desativ</div>
<div class="t" style="left:174.7px;top:217.88px;font-size:11.6px;color:#3a4650;font-weight:bold;letter-spacing:-0.1px">campanha</div>
<div class="abs" style="left:445.8px;top:221.5px;width:0;height:0;border-left:4.5px solid transparent;border-right:4.5px solid transparent;border-top:5px solid #111"></div>
<div class="abs" style="left:486.5px;top:221.5px;width:0;height:0;border-left:4.5px solid transparent;border-right:4.5px solid transparent;border-top:5px solid #111"></div>
<div class="t" style="left:511px;top:211.68px;font-size:11.6px;color:#3a4650;font-weight:bold;letter-spacing:-0.1px">Estratégia de</div>
<div class="t" style="left:511px;top:224.68px;font-size:11.6px;color:#3a4650;font-weight:bold;">lance</div>
<div class="t" style="left:622.8px;top:217.88px;font-size:11.6px;color:#3a4650;font-weight:bold;letter-spacing:-0.1px">Orçamento</div>
<div class="t" style="left:734.6px;top:211.68px;font-size:11.6px;color:#3a4650;font-weight:bold;letter-spacing:-0.2px">Configuração</div>
<div class="t" style="left:734.6px;top:224.68px;font-size:11.6px;color:#3a4650;font-weight:bold;letter-spacing:-0.2px">de atribuição</div>
<svg class="abs" style="left:834.2px;top:217.2px;" width="10" height="10" viewBox="0 0 10 10"><circle cx="5" cy="5" r="5" fill="#1877f2"/><rect x="4.2" y="4.2" width="1.7" height="3.9" fill="#fff"/><circle cx="5" cy="2.6" r="0.95" fill="#fff"/></svg>
<div class="t" style="left:851.3px;top:217.88px;font-size:11.6px;color:#3a4650;font-weight:bold;letter-spacing:-0.2px">Resultados</div>
<div class="abs" style="left:932.2px;top:221.5px;width:0;height:0;border-left:4.5px solid transparent;border-right:4.5px solid transparent;border-top:5px solid #111"></div>
<div class="t" style="left:956.6px;top:217.88px;font-size:11.6px;color:#3a4650;font-weight:bold;letter-spacing:-0.2px">Alcance</div>
<div class="abs" style="left:1054.0px;top:221.5px;width:0;height:0;border-left:4.5px solid transparent;border-right:4.5px solid transparent;border-top:5px solid #111"></div>
<div class="t" style="left:1078.4px;top:217.88px;font-size:11.6px;color:#3a4650;font-weight:bold;letter-spacing:-0.2px">Impressões</div>
<div class="abs" style="left:1176.0px;top:221.5px;width:0;height:0;border-left:4.5px solid transparent;border-right:4.5px solid transparent;border-top:5px solid #111"></div>
<div class="t" style="left:1199.7px;top:211.68px;font-size:11.6px;color:#3a4650;font-weight:bold;letter-spacing:-0.2px">Custo por</div>
<div class="t" style="left:1199.7px;top:224.68px;font-size:11.6px;color:#3a4650;font-weight:bold;letter-spacing:-0.2px">resultado</div>
<div class="abs" style="left:1297.7px;top:221.5px;width:0;height:0;border-left:4.5px solid transparent;border-right:4.5px solid transparent;border-top:5px solid #111"></div>
<div class="t" style="left:1322px;top:217.88px;font-size:11.6px;color:#3a4650;font-weight:bold;letter-spacing:-0.3px">Valor usado</div>
<div class="abs" style="left:1421.9px;top:221.5px;width:0;height:0;border-left:4.5px solid transparent;border-right:4.5px solid transparent;border-top:5px solid #111"></div>
<div class="t" style="left:1446.3px;top:217.88px;font-size:11.6px;color:#3a4650;font-weight:bold;letter-spacing:-0.2px">Término</div>
<div class="abs" style="left:1516.3px;top:221.5px;width:0;height:0;border-left:4.5px solid transparent;border-right:4.5px solid transparent;border-top:5px solid #111"></div>
<svg class="abs" style="left:1540px;top:218px;" width="10" height="10" viewBox="0 0 10 10"><circle cx="5" cy="5" r="5" fill="#c4c8cd"/><path d="M5 2.3 L5 7.7 M2.3 5 L7.7 5" stroke="#fff" stroke-width="1.5"/></svg>
<div class="t" style="left:169.6px;top:257.19px;font-size:11px;color:#2f6fd0;font-weight:normal;letter-spacing:-0.2px">[C01] |</div>
<div class="abs" style="left:201px;top:257.6px;width:34px;height:16px;background:#fff"></div>
<div class="t" style="left:237.6px;top:257.40px;font-size:10.75px;color:#2f6fd0;font-weight:normal;letter-spacing:0.02px">[ENGAJAMENTO] [WHATSAPP] [ABO] [FR...</div>
<div class="t" style="left:509px;top:251.02px;font-size:11.2px;color:#3a4650;font-weight:normal;">Usando a estraté...</div>
<div class="t" style="left:621px;top:251.44px;font-size:10.7px;color:#3a4650;font-weight:normal;">Usando o orçam...</div>
<div class="t" style="left:732.75px;top:251.02px;font-size:11.2px;color:#3a4650;font-weight:normal;">Clique de 7 dia...</div>
<div class="t" style="right:671.5px;top:251.02px;font-size:11.2px;color:#3a4650;font-weight:normal;text-align:right;"><span style='border-bottom:1px dotted #5a6570'>62</span></div>
<div class="t" style="right:660px;top:249.15px;font-size:7.5px;color:#555;font-weight:normal;text-align:right;">[2]</div>
<div class="t" style="right:676px;top:267.87px;font-size:9.6px;color:#8a9199;font-weight:normal;text-align:right;">Conversas por men...</div>
<div class="t" style="right:538.2px;top:251.36px;font-size:10.8px;color:#3a4650;font-weight:normal;text-align:right;">1.627</div>
<div class="t" style="right:416.70000000000005px;top:251.36px;font-size:10.8px;color:#3a4650;font-weight:normal;text-align:right;">1.771</div>
<div class="t" style="right:306.20000000000005px;top:251.40px;font-size:10.75px;color:#3a4650;font-weight:normal;text-align:right;"><span style='border-bottom:1px dotted #5a6570'>R$ 0,68</span></div>
<div class="t" style="right:295px;top:249.15px;font-size:7.5px;color:#555;font-weight:normal;text-align:right;">[2]</div>
<div class="t" style="left:1198.5px;top:267.87px;font-size:9.6px;color:#8a9199;font-weight:normal;">Por conversa por m...</div>
<div class="t" style="right:170px;top:251.27px;font-size:10.9px;color:#3a4650;font-weight:normal;text-align:right;">R$ 42,34</div>
<div class="t" style="left:1444.4px;top:251.19px;font-size:11px;color:#3a4650;font-weight:normal;">Campanhas c...</div>
<div class="t" style="left:176.4px;top:290.98px;font-size:11.25px;color:#3a4650;font-weight:normal;">Resultados de 1 campanha</div>
<svg class="abs" style="left:317px;top:292px;" width="10" height="10" viewBox="0 0 10 10"><circle cx="5" cy="5" r="5" fill="#1c2b33"/><rect x="4.3" y="4.3" width="1.5" height="3.8" fill="#fff"/><circle cx="5" cy="2.7" r="0.85" fill="#fff"/></svg>
<div class="t" style="left:734.6px;top:291.02px;font-size:11.2px;color:#3a4650;font-weight:normal;">Clique de 7 dia...</div>
<div class="t" style="right:670.7px;top:291.02px;font-size:11.2px;color:#3a4650;font-weight:normal;text-align:right;">62</div>
<div class="t" style="right:658px;top:290.15px;font-size:7.5px;color:#333;font-weight:normal;text-align:right;"><b>[2]</b></div>
<div class="t" style="left:834.4px;top:308.87px;font-size:9.6px;color:#8a9199;font-weight:normal;">Conversas por men...</div>
<div class="t" style="right:537.2px;top:291.36px;font-size:10.8px;color:#3a4650;font-weight:normal;text-align:right;"><span style='border-bottom:1px dotted #5a6570'>1.627</span></div>
<div class="t" style="left:956px;top:308.87px;font-size:9.6px;color:#8a9199;font-weight:normal;">contas da Central de C...</div>
<div class="t" style="right:415.20000000000005px;top:291.36px;font-size:10.8px;color:#3a4650;font-weight:normal;text-align:right;">1.771</div>
<div class="t" style="right:414.5999999999999px;top:308.79px;font-size:9.7px;color:#8a9199;font-weight:normal;text-align:right;">Total</div>
<div class="t" style="right:305px;top:291.40px;font-size:10.75px;color:#3a4650;font-weight:normal;text-align:right;"><span style='border-bottom:1px dotted #5a6570'>R$ 0,68</span></div>
<div class="t" style="right:294px;top:290.15px;font-size:7.5px;color:#333;font-weight:normal;text-align:right;"><b>[2]</b></div>
<div class="t" style="left:1199.7px;top:308.87px;font-size:9.6px;color:#8a9199;font-weight:normal;">Por conversa por m...</div>
<div class="t" style="right:169px;top:291.27px;font-size:10.9px;color:#3a4650;font-weight:normal;text-align:right;">R$ 42,34</div>
<div class="t" style="right:169px;top:308.83px;font-size:9.65px;color:#8a9199;font-weight:normal;text-align:right;">Total usado</div>
<div class="abs" style="left:173px;top:338.5px;width:1382.5px;height:5.5px;background:#bcbcbc;border-radius:3px"></div>
<div class="abs" style="left:826px;top:202px;width:105px;height:37.5px;border:4px solid #ec1b24"></div>
<div class="abs" style="left:1191.3px;top:202px;width:74.0px;height:37.75px;border:4px solid #ec1b24"></div>
<div class="abs" style="left:1311.3px;top:200px;width:126.70000000000005px;height:39.69999999999999px;border:4px solid #ec1b24"></div>
<div class="abs" style="left:823.5px;top:286.3px;width:125.29999999999995px;height:36.5px;border:4px solid #ec1b24"></div>
<div class="abs" style="left:1193px;top:284.8px;width:122px;height:44.19999999999999px;border:4px solid #ec1b24"></div>
<div class="abs" style="left:1329.4px;top:283.5px;width:120.89999999999986px;height:36.5px;border:4px solid #ec1b24"></div>
<div class="abs" style="left:1550px;top:771px;width:36px;height:3px;background:#555"></div>
<div class="abs" style="left:1586px;top:771px;width:14px;height:3px;background:#fff"></div>
</body></html>
